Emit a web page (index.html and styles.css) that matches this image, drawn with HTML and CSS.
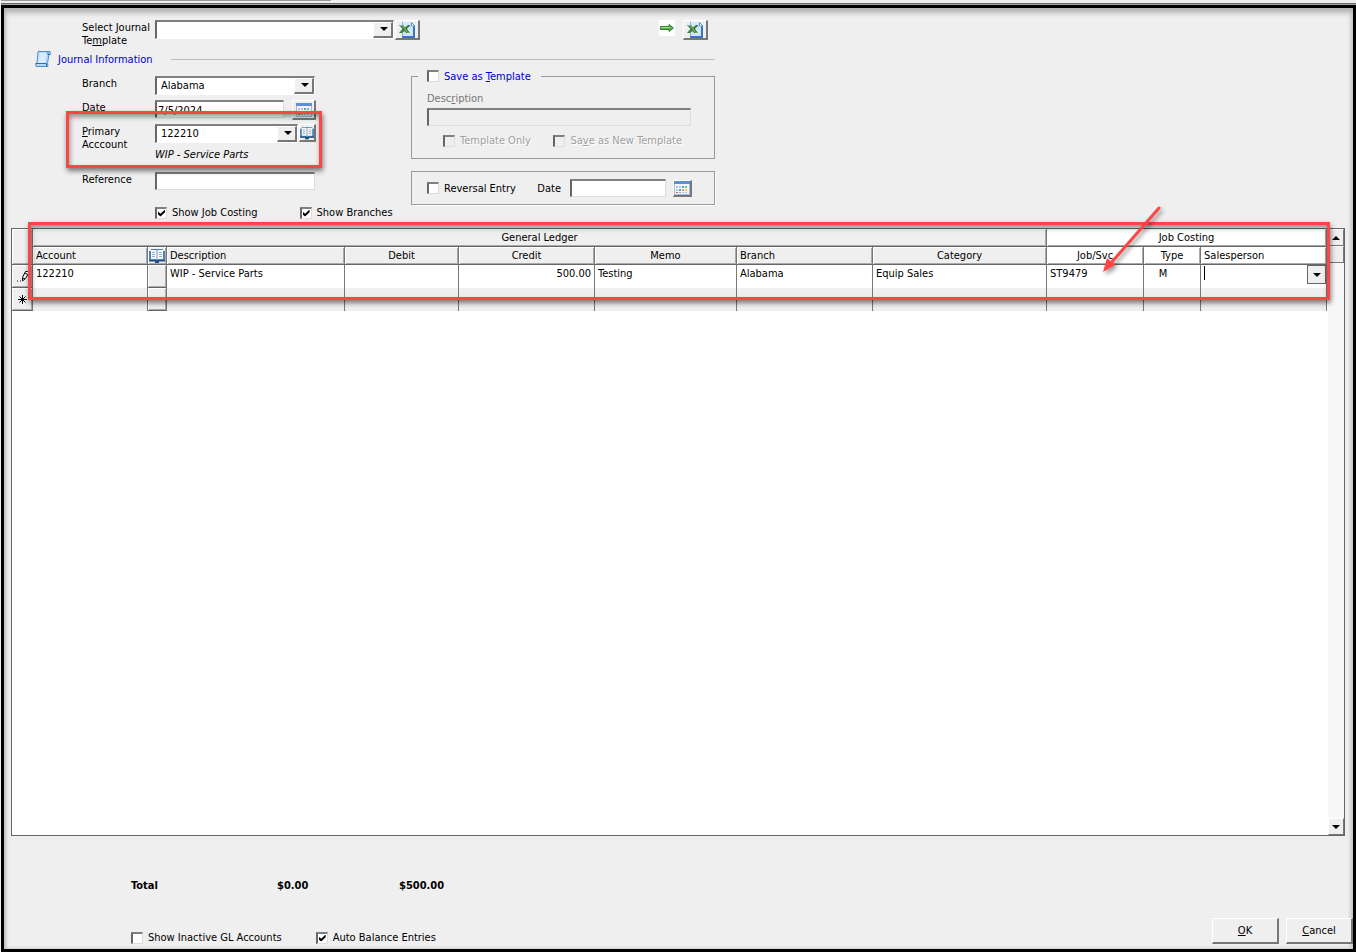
FILE: index.html
```html
<!DOCTYPE html>
<html lang="en">
<head>
<meta charset="utf-8">
<title>Journal Entry</title>
<link rel="stylesheet" href="styles.css">
</head>
<body>
<svg class="defs" aria-hidden="true">
  <symbol id="i-excel" viewBox="0 0 18 16">
    <path d="M4 .5h10l3 3v12H4z" fill="#d3e6fa"/>
    <path d="M4.500 0v15.500" stroke="#7fb0e6"/>
    <path d="M16 4v11M4 15h13" fill="none" stroke="#3c74c4" stroke-width="2"/>
    <path d="M13.500 .5v3.500h3.500z" fill="#fff" stroke="#5a94da"/>
    <path d="M1 3h4l2 2.500 3-2.500h2.500L9 7l3 4H8L6.500 9 4 11H1l3.500-4z" fill="#3c7f3c"/>
    <path d="M2 3.500h2.500l5 7h1.500" fill="none" stroke="#86bb7c"/>
  </symbol>
  <symbol id="i-calendar" viewBox="0 0 16 14">
    <path d="M.5.5h15v13H.5z" fill="#f2f7fd" stroke="#9cbce4"/>
    <path d="M0 0h16v3H0z" fill="#5a8fd6"/>
    <path d="M2 5h2v2H2zM5 5h2v2H5zM2 8h2v2H2z" fill="#b9c4d0"/>
    <path d="M8 5h2v2H8zM5 8h2v2H5z" fill="#4ea4e0"/>
    <path d="M11 5h2v2h-2zM5 11h2v1H5z" fill="#7fc06c"/>
    <path d="M8 8h2v2H8z" fill="#f09a4a"/><path d="M11 8h2v2h-2z" fill="#f4c84c"/>
    <path d="M2 11h2v1H2z" fill="#e0564a"/><path d="M8 11h2v1H8zM11 11h2v1h-2z" fill="#a9c4e4"/>
  </symbol>
  <symbol id="i-book" viewBox="0 0 16 14">
    <path d="M0 2h2V0h12v2h2v10h-6v2H6v-2H0z" fill="#4a84bc"/>
    <path d="M0 11h16v1.500h-6V14H6v-1.500H0z" fill="#234f80"/>
    <path d="M2 1h5l1 1 1-1h5v9H9l-1 1-1-1H2z" fill="#f5f9fd"/>
    <path d="M3 3.500h3M3 5.500h3M3 7.500h3M10 3.500h3M10 5.500h3M10 7.500h3" stroke="#a3adb7"/>
    <path d="M8 2v9" stroke="#8198ae"/>
  </symbol>
  <symbol id="i-scroll" viewBox="0 0 16 16">
    <path d="M3 .5h12l.5 3H14l-1.500 9 .5 3H1L.5 12.500H2z" fill="#b4d7f8" stroke="#4c92d2"/>
    <path d="M4.500 2h7L10 12H3z" fill="#d8ecff"/>
    <path d="M13 1v2.500h2M1 12.500h10.500v2.500" fill="none" stroke="#2c6fb0"/>
  </symbol>
  <symbol id="i-arrow" viewBox="0 0 16 16">
    <path d="M1.500 6.500h8.500v-2L14.500 8 10 11.500v-2H1.500z" fill="#58b046" stroke="#387a34"/>
    <path d="M2 7.500h9" stroke="#a5dc92"/>
  </symbol>
</svg>
<div class="topline"></div>
<main class="frame">
  <form class="form">
    <div class="row template-row">
      <label class="label" for="tpl">Select Journal<br>Te<u>m</u>plate</label>
      <span class="combo combo-wide"><select id="tpl"><option></option></select></span>
      <button type="button" class="icon-btn" aria-label="Export template"><svg width="18" height="16"><use href="#i-excel"/></svg></button>
      <svg class="go" width="16" height="16"><use href="#i-arrow"/></svg>
      <button type="button" class="icon-btn" aria-label="Import from Excel"><svg width="18" height="16"><use href="#i-excel"/></svg></button>
    </div>
    <div class="section"><svg width="16" height="16"><use href="#i-scroll"/></svg><h1>Journal Information</h1><hr></div>
    <div class="columns">
      <div class="left">
        <div class="row"><label class="label" for="branch">Branch</label><span class="combo combo-mid"><select id="branch"><option>Alabama</option></select></span></div>
        <div class="row"><label class="label" for="date">Date</label><input class="text date" id="date" value="7/5/2024"><button type="button" class="icon-btn date-btn" aria-label="Pick date"><svg width="16" height="14"><use href="#i-calendar"/></svg></button></div>
        <div class="row primary"><label class="label" for="acct"><u>P</u>rimary<br>Acccount</label>
          <div class="stack"><div class="pair"><span class="combo combo-acct"><select id="acct"><option>122210</option></select></span><button type="button" class="icon-btn book-btn" aria-label="Account list"><svg width="15" height="14"><use href="#i-book"/></svg></button></div><em>WIP - Service Parts</em></div></div>
        <div class="row"><label class="label" for="ref">Reference</label><input class="text ref" id="ref"></div>
        <div class="checks"><label class="check"><input type="checkbox" checked>Show Job Costing</label><label class="check"><input type="checkbox" checked>Show Branches</label></div>
        <div class="mark mark-primary"></div>
      </div>
      <div class="right">
        <fieldset class="box template-box">
          <legend><label class="check blue"><input type="checkbox"><span>Save as <u>T</u>emplate</span></label></legend>
          <label class="dim" for="desc">Desc<u>r</u>iption</label>
          <input class="text desc" id="desc" disabled>
          <div class="suboptions"><label class="check off"><input type="checkbox" disabled><span>Template Only</span></label><label class="check off"><input type="checkbox" disabled><span>Sa<u>v</u>e as New Template</span></label></div>
        </fieldset>
        <div class="box reversal"><label class="check"><input type="checkbox">Reversal Entry</label><label class="rlabel" for="rdate">Date</label><input class="text rdate" id="rdate"><button type="button" class="icon-btn small-btn" aria-label="Pick reversal date"><svg width="16" height="14"><use href="#i-calendar"/></svg></button></div>
      </div>
    </div>
  </form>

  <section class="grid">
    <div class="sheet">
      <table>
        <colgroup><col class="c-sel"><col class="c-acct"><col class="c-icon"><col class="c-desc"><col class="c-debit"><col class="c-credit"><col class="c-memo"><col class="c-branch"><col class="c-cat"><col class="c-job"><col class="c-type"><col></colgroup>
        <thead>
          <tr><th rowspan="2"></th><th colspan="8">General Ledger</th><th colspan="3" class="light">Job Costing</th></tr>
          <tr><th class="start">Account</th><th class="icon"><svg width="16" height="14"><use href="#i-book"/></svg></th><th class="start">Description</th><th>Debit</th><th>Credit</th><th>Memo</th><th class="start">Branch</th><th>Category</th><th class="light">Job/Svc</th><th class="light">Type</th><th class="light start">Salesperson</th></tr>
        </thead>
        <tbody>
          <tr><td class="head"><svg width="16" height="16" viewBox="0 0 16 16"><path d="M3 13h1M6 13h1" stroke="#000"/><path d="M8.500 12.500V9.500l3-6h2l1.500 1-3.500 6-3 2.500z" fill="#fff" stroke="#000"/><path d="M11 5l2.500 1.500M9 10l2 1" stroke="#000"/></svg></td><td>122210</td><td class="head"></td><td>WIP - Service Parts</td><td></td><td class="num">500.00</td><td>Testing</td><td>Alabama</td><td>Equip Sales</td><td>ST9479</td><td class="mid">M</td><td class="edit"><span class="combo combo-cell"><select aria-label="Salesperson"><option></option></select><i class="caret"></i></span></td></tr>
          <tr class="new"><td class="head"><svg width="9" height="9" viewBox="0 0 9 9"><path d="M4.500 0v9M0 4.500h9M1.500 1.500l6 6M7.500 1.500l-6 6" stroke="#000"/></svg></td><td></td><td class="head"></td><td></td><td></td><td></td><td></td><td></td><td></td><td></td><td></td><td></td></tr>
        </tbody>
      </table>
    </div>
    <div class="scroll"><button type="button" class="up" aria-label="Scroll up"></button><div class="thumb"></div><button type="button" class="down" aria-label="Scroll down"></button></div>
    <div class="mark mark-grid"></div>
    <svg class="pointer" width="64" height="72" viewBox="0 0 64 72"><path d="M58 3L10 58" stroke="#f44" stroke-width="3" stroke-linecap="round"/><path d="M2 67l4-14 8 7z" fill="#f44"/></svg>
  </section>

  <footer class="footer">
    <div class="totals"><span>Total</span><span>$0.00</span><span>$500.00</span></div>
    <div class="bottom">
      <label class="check"><input type="checkbox">Show Inactive GL Accounts</label>
      <label class="check auto"><input type="checkbox" checked>Auto Balance Entries</label>
      <div class="actions"><button type="button" class="btn"><span><u>O</u>K</span></button><button type="button" class="btn"><span><u>C</u>ancel</span></button></div>
    </div>
  </footer>
</main>
</body>
</html>
```
FILE: styles.css
```css
* { box-sizing: border-box; }
body { margin: 0; min-height: 100vh; display: flex; flex-direction: column; background: #efefef; color: #000; font: 11px/13px "DejaVu Sans Condensed", "Noto Sans", sans-serif; }
input, select, button { font: inherit; color: inherit; margin: 0; padding: 0; border-radius: 0; }
u { text-underline-offset: 1px; }
.defs { position: absolute; width: 0; height: 0; }
.topline { height: 5px; margin-left: 1px; border-bottom: 1px solid #aaa; background: linear-gradient(#999, #999) 0 0 / 330px 1px no-repeat, linear-gradient(#666, #666) 0 3px / 100% 1px no-repeat; }
.frame { flex: 1; display: flex; flex-direction: column; margin-left: 1px; border: 3px solid #000; box-shadow: inset 0 5px 5px #b4b4b4, inset -2px 0 4px #ccc, inset 2px 0 3px #ccc; }

.form { padding: 12px 7px 0 31px; max-width: 718px; }
.row { display: flex; align-items: flex-start; min-height: 24px; padding-left: 47px; }
.label { flex: none; width: 73px; padding-top: 1px; white-space: nowrap; }
.template-row { min-height: 31px; }
.go { margin-left: auto; margin-right: 7px; background: #fff; }
.template-row .icon-btn:last-child { margin-right: 7px; }
.section { display: flex; align-items: center; height: 16px; gap: 7px; }
.section h1 { margin: 0; width: 106px; font-size: 11px; line-height: 13px; font-weight: 400; color: #00c; white-space: nowrap; }
.section hr { flex: 1; margin: 0; border: 0; border-top: 1px solid #bbb; }
.columns { display: flex; }
.left { position: relative; width: 376px; padding-top: 9px; }
.right { flex: 1; padding-top: 2px; }

.combo { position: relative; display: inline-block; height: 19px; }
.combo select { display: block; width: 100%; height: 100%; appearance: none; background: #fff; border: 1px solid; border-width: 2px 1px 1px 2px; border-color: #808080 #fff #fff #666; padding: 0 0 1px 4px; outline: 0; }
.combo::before { content: ""; position: absolute; z-index: 1; right: 1px; top: 2px; bottom: 1px; width: 17px; background: #efefef; border: 1px solid; border-width: 1px 2px 2px 1px; border-color: #fff #777 #777 #fff; pointer-events: none; }
.combo::after { content: ""; position: absolute; z-index: 1; right: 6px; top: 7px; border: 4px solid transparent; border-top: 4px solid #000; border-bottom: 0; pointer-events: none; }
.combo-wide { width: 239px; }
.combo-mid { width: 160px; }
.combo-acct { width: 143px; }
.icon-btn { display: flex; align-items: center; justify-content: center; width: 25px; height: 20px; margin-left: 1px; background: #efefef; border: 1px solid; border-width: 1px 2px 2px 1px; border-color: #fff #777 #777 #fff; }
.date-btn { margin-left: 8px; width: 24px; }
.book-btn { width: 17px; height: 18px; }
.text { height: 18px; background: #fff; border: 1px solid; border-width: 2px 1px 1px 2px; border-color: #808080 #ddd #ddd #666; padding-left: 1px; }
.date { width: 129px; padding-top: 2px; }
.ref { width: 160px; }
.primary { min-height: 48px; }
.stack { display: flex; flex-direction: column; gap: 5px; }
.pair { display: flex; }
.check { display: inline-flex; align-items: center; gap: 5px; white-space: pre; }
.check input { position: relative; appearance: none; width: 12px; height: 12px; background: #fff; border: 1px solid; border-width: 2px 1px 1px 2px; border-color: #808080 #ddd #ddd #666; }
.check input:checked::before { content: ""; position: absolute; inset: 1px; background: #000; clip-path: polygon(0 30%, 36% 62%, 100% 0, 100% 40%, 36% 100%, 0 70%); }
.checks { display: flex; align-items: flex-start; gap: 42px; height: 32px; padding: 10px 0 0 120px; }

.box { margin: 0; border: 1px solid #999; box-shadow: 1px 1px #fff; }
.template-box { height: 90px; padding: 0 23px 0 15px; min-width: 0; box-shadow: none; }
legend { margin-left: -9px; padding: 0 10px 0 9px; height: 14px; display: flex; align-items: center; }
.blue { color: #00c; }
.template-box .dim { display: block; padding-top: 9px; color: #777; }
.desc { display: block; width: 100%; margin-top: 3px; background: #efefef; }
.suboptions { display: flex; justify-content: space-between; padding: 8px 9px 0 16px; }
.off { color: #a0a0a0; text-shadow: 1px 1px #fff; }
.off input { background: #efefef; }
.reversal { display: flex; align-items: center; height: 34px; margin-top: 12px; padding-left: 15px; }
.rlabel { margin-left: auto; }
.rdate { width: 96px; margin-left: 9px; }
.small-btn { width: 19px; margin: 0 22px 0 7px; height: 17px; }

.grid { position: relative; flex: 1; display: flex; margin: 0 8px 0 7px; border: 1px solid #666; background: #fff; }
.sheet { flex: 1; min-width: 0; padding-right: 1px; }
table { width: 100%; table-layout: fixed; border-collapse: separate; border-spacing: 0; }
.c-sel { width: 21px; } .c-acct { width: 115px; } .c-icon { width: 19px; } .c-desc { width: 178px; } .c-debit { width: 114px; } .c-credit { width: 136px; } .c-memo { width: 142px; } .c-branch { width: 136px; } .c-cat { width: 174px; } .c-job { width: 97px; } .c-type { width: 57px; }
th, td { padding: 0 3px; font-weight: 400; border-right: 1px solid #777; overflow: hidden; white-space: nowrap; }
th { height: 18px; background: #efefef; border-bottom: 1px solid #666; box-shadow: inset 1px 1px #fff, inset -1px -1px #aaa; }
th.light { background: #fff; }
.start { text-align: left; }
th.icon { padding: 0 1px; }
th svg, td svg { display: block; margin: auto; }
td { height: 23px; vertical-align: top; padding-top: 2px; }
td.head { padding: 0 1px; vertical-align: middle; background: #efefef; border-bottom: 1px solid #666; box-shadow: inset 1px 1px #fff, inset -1px -1px #aaa; }
.new td { background: #efefef; }
.num { text-align: right; }
.mid { text-align: center; padding-right: 21px; }
.edit { padding: 0; }
.combo-cell { display: block; width: 100%; }
.combo-cell select { border: 0; }
.combo-cell::before { top: 0; right: 0; bottom: 0; border: 1px solid #666; }
.combo-cell::after { right: 5px; top: 8px; }
.caret { position: absolute; left: 3px; top: 1px; width: 1px; height: 14px; background: #000; }
.scroll { display: flex; flex-direction: column; width: 16px; background: #f7f7f7; }
.scroll button, .thumb { flex: none; width: 16px; height: 17px; background: #efefef; border: 1px solid; border-color: #fff #777 #777 #fff; }
.scroll button::before { content: ""; display: block; width: 0; margin: auto; border: 4px solid transparent; }
.up::before { border-top: 0 !important; border-bottom-color: #000 !important; }
.down::before { border-bottom: 0 !important; border-top-color: #000 !important; }
.down { margin-top: auto; }

.mark { position: absolute; z-index: 2; border: 3px solid #f44; box-shadow: 1px 3px 5px rgba(0,0,0,.5), inset 1px 3px 5px rgba(0,0,0,.4); pointer-events: none; }
.mark-primary { left: 31px; top: 44px; width: 256px; height: 57px; }
.mark-grid { left: 16px; top: -7px; right: 14px; height: 78px; }
.pointer { position: absolute; z-index: 3; left: 1089px; top: -24px; filter: drop-shadow(2px 3px 2px rgba(0,0,0,.4)); }

.footer { padding: 43px 0 5px 127px; }
.totals { display: grid; grid-template-columns: 146px 122px auto; font-weight: 700; }
.bottom { display: flex; align-items: flex-end; padding-top: 26px; }
.auto { margin-left: 34px; }
.actions { display: flex; gap: 7px; margin-left: auto; }
.btn { width: 67px; height: 26px; background: #efefef; border: 1px solid; border-width: 1px 2px 2px 1px; border-color: #fff #777 #777 #fff; }
```
